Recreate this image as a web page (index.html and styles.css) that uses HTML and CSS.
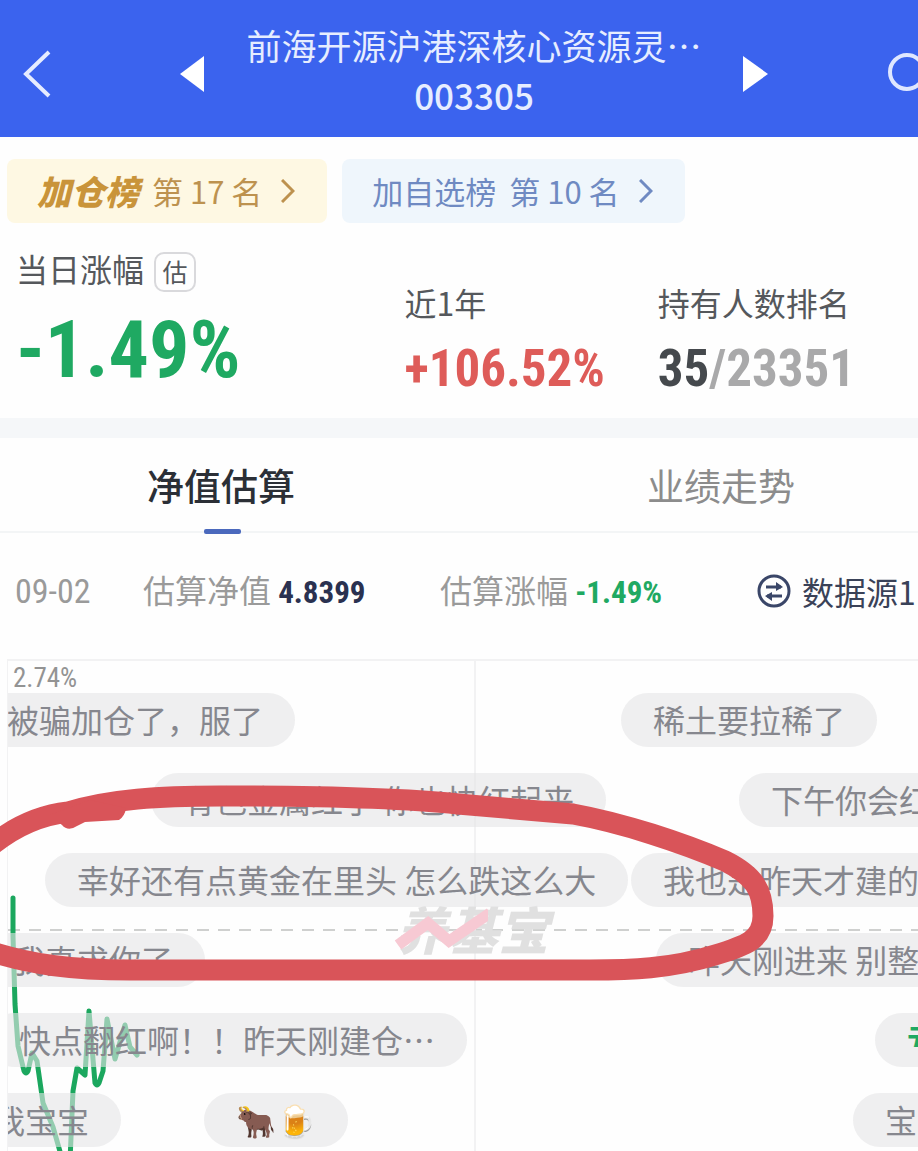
FILE: index.html
```html
<!DOCTYPE html>
<html lang="zh-CN">
<head>
<meta charset="UTF-8">
<meta name="viewport" content="width=device-width, initial-scale=1.0">
<title>前海开源沪港深核心资源灵活配置</title>
<link rel="stylesheet" href="styles.css">
</head>
<body>
	<header class="topbar">
		<button class="icon-btn back" aria-label="返回">
			<svg width="30" height="52" viewBox="0 0 30 52"><path d="M27 4 4 26l23 22" fill="none" stroke="#e6ecff" stroke-width="4"/></svg>
		</button>
		<button class="icon-btn" aria-label="上一只">
			<svg width="26" height="38" viewBox="0 0 26 38"><path d="M0 19 24 1v36z" fill="#fff"/></svg>
		</button>
		<div class="fund">
			<h1>前海开源沪港深核心资源灵…</h1>
			<p>003305</p>
		</div>
		<button class="icon-btn" aria-label="下一只">
			<svg width="26" height="38" viewBox="0 0 26 38"><path d="M26 19 1 1v36z" fill="#fff"/></svg>
		</button>
		<button class="icon-btn search" aria-label="搜索">
			<svg width="46" height="46" viewBox="0 0 46 46"><circle cx="19" cy="21" r="17" fill="none" stroke="#dfe7ff" stroke-width="4"/><path d="m31 33 12 12" stroke="#dfe7ff" stroke-width="4"/></svg>
		</button>
	</header>

	<nav class="ranks">
		<a class="rank rank-gold" href="#">
			<b>加仓榜</b><span>第 17 名</span>
			<svg width="14" height="24" viewBox="0 0 14 24"><path d="m1 1 11 11L1 23" fill="none" stroke="currentColor" stroke-width="3"/></svg>
		</a>
		<a class="rank rank-blue" href="#">
			<span>加自选榜</span><span>第 10 名</span>
			<svg width="14" height="24" viewBox="0 0 14 24"><path d="m1 1 11 11L1 23" fill="none" stroke="currentColor" stroke-width="3"/></svg>
		</a>
	</nav>

	<section class="stats">
		<div class="stat stat-main">
			<p class="label">当日涨幅 <span class="tag">估</span></p>
			<p class="num num-big down">-1.49%</p>
		</div>
		<div class="stat">
			<p class="label">近1年</p>
			<p class="num up">+106.52%</p>
		</div>
		<div class="stat">
			<p class="label">持有人数排名</p>
			<p class="num">35<span class="total">/23351</span></p>
		</div>
	</section>

	<div class="tabs" role="tablist">
		<button class="tab active" role="tab" aria-selected="true">净值估算</button>
		<button class="tab" role="tab" aria-selected="false">业绩走势</button>
	</div>

	<div class="info">
		<span class="date">09-02</span>
		<span>估算净值 <b class="val">4.8399</b></span>
		<span>估算涨幅 <b class="val down">-1.49%</b></span>
		<button class="source">
			<svg width="34" height="34" viewBox="0 0 34 34" fill="none" stroke="#3a4668" stroke-width="3"><circle cx="17" cy="17" r="15"/><path d="M9 13h15M10 22h15"/><path d="m19 8 7 5-7 4zM15 18l-7 4 7 5z" fill="#3a4668" stroke="none"/></svg>
			数据源1
		</button>
	</div>

	<main class="chart">
		<div class="plot">
			<span class="axis">2.74%</span>
			<span class="watermark">养基宝</span>
			<svg class="line" width="480" height="492" viewBox="0 0 480 492">
				<path d="M390 284 420 262 441 280 482 252" fill="none" stroke="#f7c9d3" stroke-width="11"/>
				<path d="M5 237v38l2 68 3 42 6 25q2 4 4 0l4-18 5 8 6 42 10 24 8 28M62 500l3-70 4-23 8 7 4-64 6 72q2 4 4 0l4-12 4-52 8 40 10-34 5 22 7 8" fill="none" stroke="#1ba75e" stroke-width="5" stroke-linecap="round" stroke-linejoin="round"/>
			</svg>
			<!-- scrolling comments, left is the current offset of each one -->
			<div class="lanes">
				<div class="lane">
					<span class="bullet" style="left:-33px">被骗加仓了，服了</span>
					<span class="bullet" style="left:613px">稀土要拉稀了</span>
				</div>
				<div class="lane">
					<span class="bullet" style="left:143px">有色金属红了 你也快红起来</span>
					<span class="bullet" style="left:731px">下午你会红的</span>
				</div>
				<div class="lane">
					<span class="bullet" style="left:37px">幸好还有点黄金在里头 怎么跌这么大</span>
					<span class="bullet" style="left:623px">我也是昨天才建的仓</span>
				</div>
				<div class="lane">
					<span class="bullet" style="left:-27px">我真求你了</span>
					<span class="bullet" style="left:648px">昨天刚进来 别整我</span>
				</div>
				<div class="lane">
					<span class="bullet" style="left:-21px">快点翻红啊！！昨天刚建仓…</span>
					<span class="bullet mine" style="left:867px">亏</span>
				</div>
				<div class="lane">
					<span class="bullet" style="left:-47px">我宝宝</span>
					<span class="bullet" style="left:196px">🐂🍺</span>
					<span class="bullet" style="left:845px">宝宝</span>
				</div>
			</div>
		</div>
		<svg class="marker" width="918" height="260" viewBox="0 760 918 260">
			<path d="M-8 845C18 824 42 815 68 812 110 799 160 796 220 796c110 0 180 2 238 8 45 4 80 7 115 10 50 9 110 29 152 47 30 15 38 30 38 55 0 24-18 30-48 39-45 14-85 15-125 15H130c-60 0-100-6-138-18" fill="none" stroke="#d95459" stroke-width="21"/>
			<path d="M50 815 62 825q6 7 15 1l8-4 34-2q6-4 7-12L90 800z" fill="#d95459"/>
		</svg>
	</main>
</body>
</html>
```
FILE: styles.css
```css
* {
	box-sizing: border-box;
}

body {
	margin: 0;
	min-height: 100vh;
	display: flex;
	flex-direction: column;
	overflow: hidden;
	background: #fefefe;
	color: #55585c;
	font-family: "Noto Sans CJK SC", sans-serif;
	font-size: 32px;
	line-height: 40px;
}

h1, p {
	margin: 0;
	font-weight: 400;
}

button {
	padding: 0;
	border: none;
	background: none;
	color: inherit;
	font: inherit;
	cursor: pointer;
}

svg {
	display: block;
	flex: none;
}

/* header */
.topbar {
	display: flex;
	align-items: center;
	justify-content: space-between;
	height: 137px;
	padding: 10px 0 0 22px;
	margin-right: -16px;
	background: #3b63ee;
	color: #e6edff;
}

.topbar .back {
	margin-right: 88px;
}

.topbar .search {
	margin-left: 80px;
}

.fund {
	text-align: center;
}

.fund h1 {
	font-size: 35px;
	line-height: 50px;
	white-space: nowrap;
}

.fund p {
	font-size: 35px;
	font-weight: 500;
	line-height: 50px;
	margin-bottom: 8px;
}

/* ranking chips */
.ranks {
	display: flex;
	gap: 15px;
	padding: 22px 7px 0;
}

.rank {
	display: flex;
	align-items: center;
	gap: 13px;
	height: 64px;
	padding: 0 32px 0 30px;
	border-radius: 8px;
	font-size: 31px;
	text-decoration: none;
	white-space: nowrap;
}

.rank svg {
	margin-left: 6px;
}

.rank b {
	font-size: 34px;
	font-weight: 900;
	font-style: italic;
	color: #c9943a;
}

.rank-gold {
	background: #fef8e3;
	color: #bd924f;
}

.rank-blue {
	background: #eff6fc;
	color: #6f8ac2;
}

/* numbers */
.stats {
	display: grid;
	grid-template-columns: 388fr 253fr 260fr;
	height: 215px;
	padding: 25px 0 0 16px;
	border-bottom: 20px solid #f5f7f9;
	white-space: nowrap;
}

.stat {
	padding-top: 34px;
}

.stat-main {
	padding-top: 0;
}

.stat-main .label {
	display: flex;
	gap: 10px;
}

.tag {
	width: 42px;
	height: 40px;
	margin-top: 4px;
	border: 2px solid #d9d9dc;
	border-radius: 10px;
	font-size: 25px;
	line-height: 34px;
	text-align: center;
}

.num {
	margin-top: 17px;
	color: #45494d;
	font-family: "Liberation Sans Narrow", "Roboto Condensed", Roboto, sans-serif;
	font-size: 51px;
	font-weight: 700;
	line-height: 60px;
}

.num-big {
	margin-top: 18px;
	font-size: 80px;
	line-height: 80px;
}

.up {
	color: #de5c59;
}

.down {
	color: #1fa962;
}

.total {
	color: #a9a9aa;
}

/* tabs */
.tabs {
	display: flex;
	justify-content: space-between;
	height: 95px;
	padding: 0 123px 0 147px;
	border-bottom: 2px solid #f3f5f6;
}

.tab {
	position: relative;
	font-size: 37px;
	color: #8c8c8c;
}

.tab.active {
	color: #2b2f36;
	font-weight: 500;
}

.tab.active::after {
	content: "";
	position: absolute;
	left: 57px;
	bottom: -3px;
	width: 37px;
	height: 5px;
	border-radius: 2px;
	background: #4b69bd;
}

/* estimate row */
.info {
	display: grid;
	grid-template-columns: 128fr 297fr 317fr 161fr;
	align-items: center;
	height: 116px;
	padding-left: 15px;
	color: #9a9a9a;
	white-space: nowrap;
}

.date, .val, .axis {
	font-family: "Liberation Sans Narrow", "Roboto Condensed", Roboto, sans-serif;
}

.date {
	font-size: 34px;
}

.val {
	font-size: 31px;
}

.val:not(.down) {
	color: #2a3150;
}

.source {
	display: flex;
	align-items: center;
	gap: 11px;
	color: #3a4258;
}

/* chart */
.chart {
	position: relative;
	flex: 1;
	min-height: 500px;
	padding: 10px 0 0 7px;
}

.plot {
	position: relative;
	height: 492px;
	border: 2px solid #f2f2f3;
	border-width: 2px 0 0 1px;
	background: linear-gradient(#f2f2f3, #f2f2f3) 466px 0 / 2px 100% no-repeat,
		repeating-linear-gradient(90deg, #cfd0cf 0 12px, transparent 12px 21px) 0 268px / 100% 2px no-repeat;
	overflow: hidden;
}

.axis {
	display: block;
	padding-left: 5px;
	font-size: 27px;
	line-height: 34px;
	color: #939393;
}

.watermark {
	position: absolute;
	left: 388px;
	top: 232px;
	color: #e0e0e0;
	font-size: 51px;
	font-style: italic;
	font-weight: 900;
	line-height: 70px;
}

.line {
	position: absolute;
	left: 0;
	top: 0;
}

.lanes {
	position: absolute;
	inset: 32px 0 0;
}

.lane {
	position: relative;
	height: 80px;
}

.bullet {
	position: absolute;
	height: 54px;
	padding: 0 32px;
	border-radius: 27px;
	background: rgba(228, 228, 230, 0.6);
	color: #86878e;
	line-height: 53px;
	white-space: nowrap;
}

.bullet.mine {
	color: #1fa962;
	font-weight: 700;
}

.marker {
	position: absolute;
	left: 0;
	top: 111px;
}
```
